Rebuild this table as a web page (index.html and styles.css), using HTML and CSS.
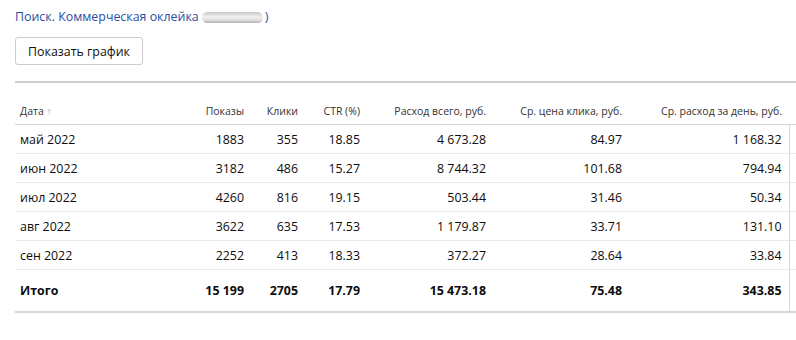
FILE: index.html
```html
<!DOCTYPE html>
<html lang="ru">
<head>
<meta charset="utf-8">
<link rel="stylesheet" href="styles.css">
</head>
<body>
<div class="page">
  <div class="title">Поиск. Коммерческая оклейка<span class="blur"></span>)</div>
  <button class="btn">Показать график</button>
  <table class="stats">
    <colgroup>
      <col class="c1"><col class="c2"><col class="c3"><col class="c4"><col class="c5"><col class="c6"><col class="c7"><col class="c8">
    </colgroup>
    <thead>
      <tr>
        <th class="left">Дата <span class="arrow">↑</span></th>
        <th>Показы</th>
        <th>Клики</th>
        <th>CTR (%)</th>
        <th>Расход всего, руб.</th>
        <th>Ср. цена клика, руб.</th>
        <th class="last">Ср. расход за день, руб.</th>
        <th class="gap"></th>
      </tr>
    </thead>
    <tbody>
      <tr><td class="left">май 2022</td><td>1883</td><td>355</td><td>18.85</td><td>4 673.28</td><td>84.97</td><td class="last">1 168.32</td><td class="gap"></td></tr>
      <tr><td class="left">июн 2022</td><td>3182</td><td>486</td><td>15.27</td><td>8 744.32</td><td>101.68</td><td class="last">794.94</td><td class="gap"></td></tr>
      <tr><td class="left">июл 2022</td><td>4260</td><td>816</td><td>19.15</td><td>503.44</td><td>31.46</td><td class="last">50.34</td><td class="gap"></td></tr>
      <tr><td class="left">авг 2022</td><td>3622</td><td>635</td><td>17.53</td><td>1 179.87</td><td>33.71</td><td class="last">131.10</td><td class="gap"></td></tr>
      <tr><td class="left">сен 2022</td><td>2252</td><td>413</td><td>18.33</td><td>372.27</td><td>28.64</td><td class="last">33.84</td><td class="gap"></td></tr>
    </tbody>
    <tfoot>
      <tr><td class="left">Итого</td><td>15 199</td><td>2705</td><td>17.79</td><td>15 473.18</td><td>75.48</td><td class="last">343.85</td><td class="gap"></td></tr>
    </tfoot>
  </table>
</div>
</body>
</html>
```
FILE: styles.css
```css
html, body {
  margin: 0;
  padding: 0;
  background: #fff;
}
body {
  font-family: "Open Sans", "Noto Sans", "Liberation Sans", sans-serif;
  color: #0d0d0d;
  overflow: hidden;
}
.page {
  padding: 8px 0 0 15px;
}
.title {
  font-size: 12.4px;
  color: #2b4fa5;
  line-height: 18px;
  display: flex;
  align-items: center;
}
.blur {
  display: inline-block;
  width: 61px;
  height: 11px;
  margin: 0 2px 0 3px;
  border-radius: 6px;
  background: linear-gradient(#c4c4c4, #efefef 40%, #e2e2e2 70%, #b0b0b0);
  filter: blur(0.6px);
}
.btn {
  margin-top: 11px;
  display: block;
  height: 28px;
  padding: 0 12px;
  font-family: inherit;
  font-size: 12.4px;
  color: #111;
  background: #fff;
  border: 1px solid #ccc;
  border-radius: 3px;
}
.stats {
  margin-top: 16px;
  width: 781px;
  border-collapse: collapse;
  table-layout: fixed;
  border-top: 2px solid #cfcfcf;
  border-bottom: 2px solid #d6d6d6;
  font-size: 12.4px;
}
.c1 { width: 170px; }
.c2 { width: 59px; }
.c3 { width: 54px; }
.c4 { width: 62px; }
.c5 { width: 126px; }
.c6 { width: 136px; }
.c7 { width: 167px; }
.c8 { width: 7px; }
th, td {
  text-align: right;
  padding: 0;
  white-space: nowrap;
}
th {
  font-size: 10.5px;
  font-weight: normal;
  color: #333;
  height: 35px;
  vertical-align: bottom;
  padding-bottom: 6px;
  border-bottom: 1px solid #d4d4d4;
}
td {
  height: 28px;
  border-bottom: 1px solid #e9e9e9;
}
.left {
  text-align: left;
  padding-left: 5px;
}
.last {
  padding-right: 7px;
}
.gap {
  border-left: 1px solid #d8d8d8;
}
thead .gap {
  border-left: none;
}
.arrow {
  color: #aaa;
  font-size: 10.5px;
}
tfoot td {
  font-weight: bold;
  height: 41px;
  border-bottom: none;
}
```
